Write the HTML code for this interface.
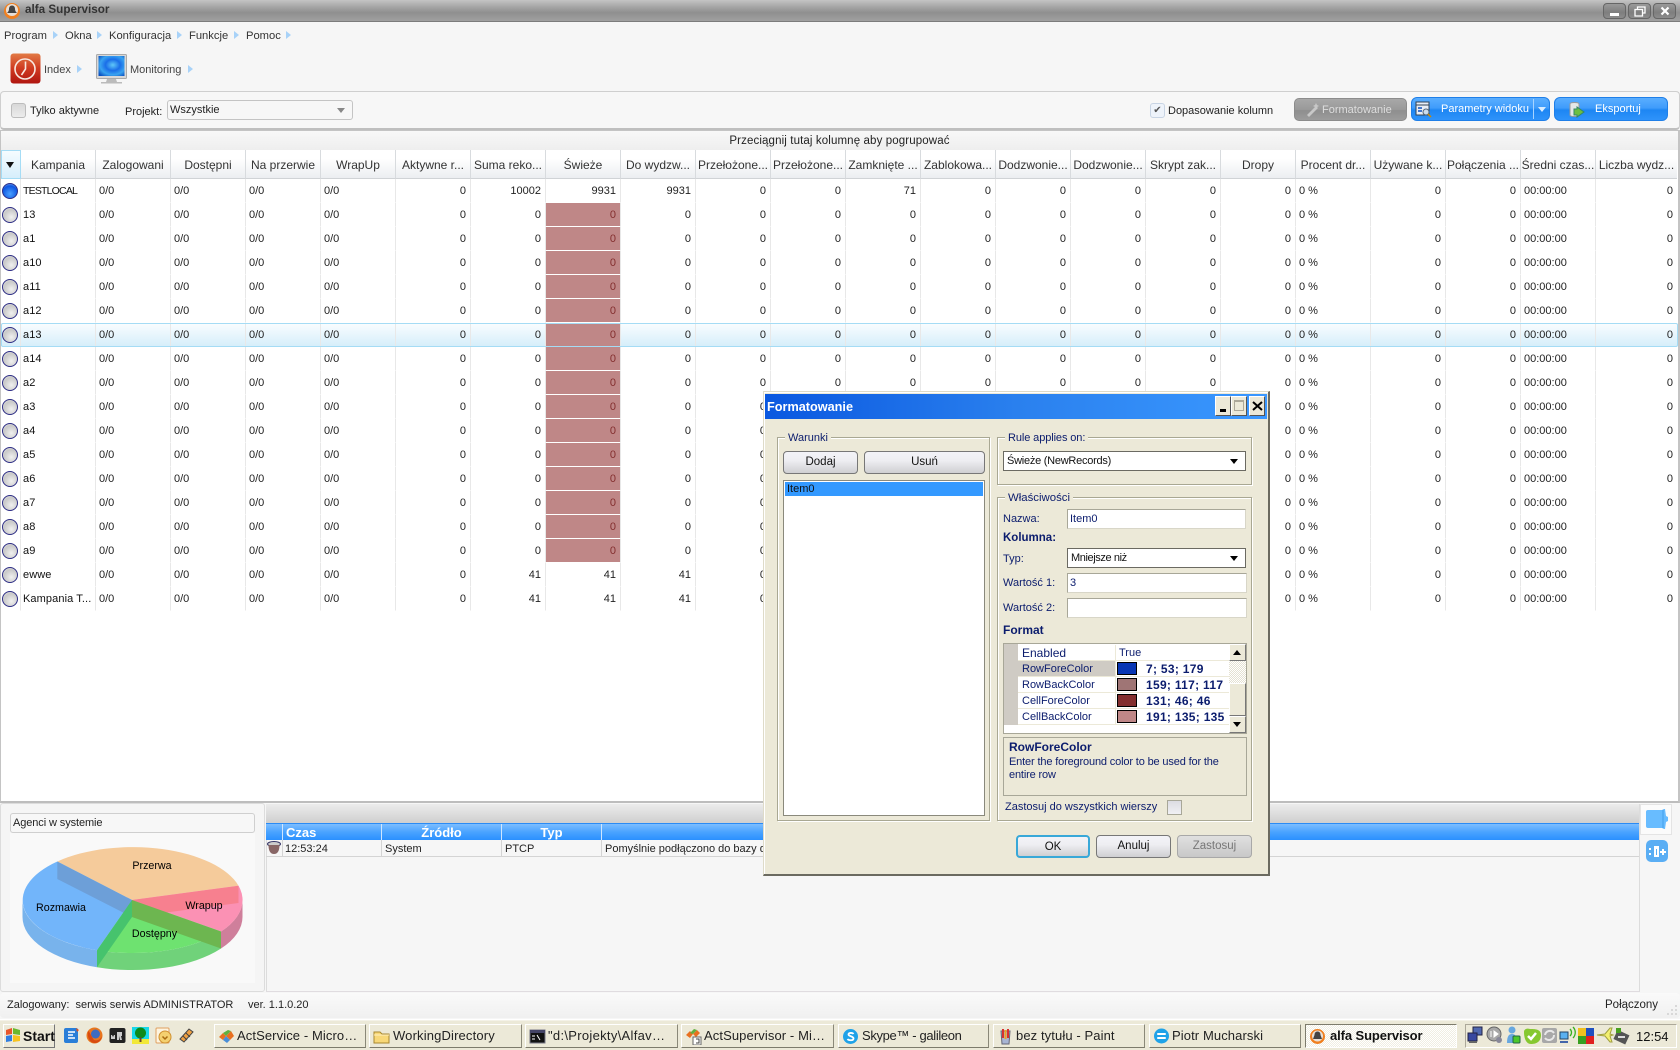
<!DOCTYPE html>
<html lang="pl"><head><meta charset="utf-8"><title>alfa Supervisor</title>
<style>
*{box-sizing:border-box}
html,body{margin:0;padding:0;width:1680px;height:1050px;overflow:hidden;background:#f6f6f6;font:11px "Liberation Sans",sans-serif;color:#222}
.a{position:absolute}
.t{position:absolute;white-space:nowrap;line-height:14px;height:14px}
.ar{position:absolute;width:0;height:0;border-left:5px solid #a8d2f8;border-top:4px solid transparent;border-bottom:4px solid transparent}
#g{position:absolute;left:1px;top:150px;width:1676px;table-layout:fixed;border-collapse:separate;border-spacing:0;font-size:11px;color:#222}
#g td,#g th{overflow:hidden;white-space:nowrap;padding:1px 4px 0 3px;text-align:right;border-right:1px solid #e8e8e8;border-bottom:1px solid #fff;height:24px}
#g th{height:29px;font-weight:normal;font-size:12px;text-align:center;padding:1px 0 0;color:#333;background:linear-gradient(#fff,#fff 30%,#eceef1);border-right:1px solid #d8dbde;border-bottom:1px solid #d0d3d6}
#g th:first-child{background:linear-gradient(#f6fcff,#d6eefb);border:1px solid #a5dcf5}
#g th:last-child,#g td:last-child{border-right:0}
#g td:nth-child(1){padding:0;}
#g td:nth-child(2){padding-left:2px;text-align:left;letter-spacing:.1px;color:#111}
#g td:nth-child(n+3):nth-child(-n+6),#g td:nth-child(19),#g td:nth-child(22){text-align:left}
#g td.x{background:#bf8787;color:#832e2e}
#g tr.h td{background:linear-gradient(#fafdff,#d6eefa)}
#g tr.h td.x{background:#bf8787}
.r{display:block;width:16px;height:16px;margin:0 0 0 1px;border-radius:50%;border:1.5px solid #2e2e86;background:radial-gradient(circle at 60% 65%,#f0f0f0,#c9c9c9 60%,#e8e8e8)}
.r.b{background:radial-gradient(circle at 50% 70%,#4aa0ff,#0d55e0 65%,#9cc4f5)}
.ld{position:absolute;background:#ece9d8;padding:0 3px;line-height:14px;white-space:nowrap}
.gb{position:absolute;border:1px solid #a9a893;box-shadow:inset 1px 1px #fff,1px 1px #fff}
.btn{position:absolute;border:1px solid #777;border-radius:4px;background:linear-gradient(#f3f3f8,#eeeef2 40%,#cfcfd2);color:#111;text-align:center;font-size:11.500px;white-space:nowrap}
.inp{position:absolute;background:#fff;border:1px solid #b3b1a0;border-color:#a8a798 #d8d6c8 #d8d6c8 #a8a798;color:#0b1c6d;padding-left:2px;font-size:11px;line-height:18px;white-space:nowrap}
.cmb{position:absolute;background:#fff;border:1px solid #6b6a62;color:#111;padding-left:3px;font-size:11px;letter-spacing:-.25px;line-height:18px;white-space:nowrap}
.cmb:after{content:"";position:absolute;right:7px;top:7px;border-top:5px solid #000;border-left:4px solid transparent;border-right:4px solid transparent}
.d{color:#0b1c6d;font-size:11px}
.pr{position:absolute;font-size:11px;color:#0b1c6d;line-height:15px;white-space:nowrap;margin-top:1px}
.sw{position:absolute;left:1117px;width:20px;height:13px;border:1px solid #000}
.val{position:absolute;left:1146px;font-weight:bold;font-size:12px;color:#0b1c6d;line-height:15px;letter-spacing:.3px;margin-top:2px}
.tb{position:absolute;top:1024px;height:24px;background:#ece9d8;border:1px solid;border-color:#fff #8a8878 #7d7b6c #fff;font-size:13px;line-height:22px;white-space:nowrap;letter-spacing:.1px;color:#222}
.tb span{position:absolute;left:22px}
.tb svg{position:absolute;left:3px;top:3px}
.blu{position:absolute;border:1px solid #1f7fe8;border-radius:6px;background:linear-gradient(#5aaeff,#3f9cfb 45%,#1d86f3 55%,#2f93fa);color:#fff;font-size:11px;line-height:22px;white-space:nowrap}
.wb{position:absolute;top:3px;width:23px;height:16px;border:1px solid #666;border-radius:4px;background:linear-gradient(#9a9a9a,#7e7e7e 60%,#8c8c8c)}
.m{font-size:11.200px;color:#333;top:29px}
</style></head><body>

<!-- title bar -->
<div class="a" style="left:0;top:0;width:1680px;height:22px;background:linear-gradient(#c4c4c4,#a8a8a8 30%,#8f8f8f 60%,#a0a0a0);border-bottom:1px solid #7c7c7c"></div>
<svg class="a" style="left:3px;top:2px" width="18" height="18" viewBox="0 0 18 18"><circle cx="9" cy="9" r="8" fill="#f08020"/><circle cx="9" cy="8" r="6" fill="#e8e0d8"/><path d="M9 3.500c2 0 3 1.600 3 3.500 0 1.500 .5 2.500 2 4H4c1.500-1.500 2-2.500 2-4 0-1.900 1-3.500 3-3.500z" fill="#444"/></svg>
<div class="t" style="left:25px;top:3px;font-weight:bold;font-size:11.700px;color:#333">alfa Supervisor</div>
<div class="wb" style="left:1603px"><div class="a" style="left:6px;top:9px;width:9px;height:3px;background:#fff"></div></div>
<div class="wb" style="left:1628px"><svg class="a" style="left:5px;top:2px" width="12" height="11" viewBox="0 0 12 11"><path d="M3.500 3V1h7.500v6H8.500M1 3.500h7.500v6.500H1z" fill="none" stroke="#fff" stroke-width="1.300"/></svg></div>
<div class="wb" style="left:1653px"><svg class="a" style="left:6px;top:2px" width="10" height="10" viewBox="0 0 10 10"><path d="M1.500 1.500l7 7M8.500 1.500l-7 7" stroke="#fff" stroke-width="2.200"/></svg></div>

<!-- menu -->
<div class="t m" style="left:4px">Program</div><i class="ar" style="left:53px;top:31px"></i>
<div class="t m" style="left:65px">Okna</div><i class="ar" style="left:97px;top:31px"></i>
<div class="t m" style="left:109px">Konfiguracja</div><i class="ar" style="left:177px;top:31px"></i>
<div class="t m" style="left:189px">Funkcje</div><i class="ar" style="left:234px;top:31px"></i>
<div class="t m" style="left:246px">Pomoc</div><i class="ar" style="left:286px;top:31px"></i>

<!-- toolbar -->
<svg class="a" style="left:10px;top:53px" width="31" height="31" viewBox="0 0 31 31"><defs><linearGradient id="ix" x1="0" y1="0" x2="0" y2="1"><stop offset="0" stop-color="#e27a45"/><stop offset=".5" stop-color="#cf3a20"/><stop offset="1" stop-color="#b01510"/></linearGradient></defs><rect x=".5" y=".5" width="30" height="30" rx="3" fill="url(#ix)"/><circle cx="15" cy="16" r="10" fill="none" stroke="#f8e8e0" stroke-width="1.600"/><path d="M15.500 8.500V16L11.500 22" fill="none" stroke="#f8e8e0" stroke-width="1.600"/></svg>
<div class="t" style="left:44px;top:63px;font-size:11px;color:#444">Index</div><i class="ar" style="left:77px;top:65px"></i>
<svg class="a" style="left:96px;top:54px" width="31" height="31" viewBox="0 0 31 31"><defs><radialGradient id="mn" cx=".55" cy=".45" r=".7"><stop offset="0" stop-color="#60c8f8"/><stop offset=".4" stop-color="#1a6ee8"/><stop offset=".7" stop-color="#3aa4f0"/><stop offset="1" stop-color="#0a50c0"/></radialGradient></defs><rect x=".5" y=".5" width="30" height="24" rx="1" fill="#d8d8d8" stroke="#aaa"/><rect x="2.500" y="2" width="26" height="20" fill="url(#mn)"/><path d="M11 25h9l1 3h5v1.500H5V28h5z" fill="#bbb"/></svg>
<div class="t" style="left:130px;top:63px;font-size:11px;color:#444">Monitoring</div><i class="ar" style="left:188px;top:65px"></i>

<!-- filter panel -->
<div class="a" style="left:0;top:91px;width:1680px;height:39px;background:#f7f7f7;border:1px solid #cfcfcf;border-bottom:2px solid #bfbfbf;border-radius:4px"></div>
<div class="a" style="left:11px;top:103px;width:15px;height:15px;border:1px solid #bcbcbc;border-radius:3px;background:linear-gradient(#d8d8d8,#ececec)"></div>
<div class="t" style="left:30px;top:104px;font-size:11px;color:#222">Tylko aktywne</div>
<div class="t" style="left:125px;top:105px;font-size:11px;color:#222">Projekt:</div>
<div class="a" style="left:167px;top:100px;width:186px;height:20px;border:1px solid #c4c4c4;border-radius:3px;background:#f7f7f7;padding-left:2px;line-height:19px;font-size:11px;color:#222">Wszystkie<i class="a" style="right:7px;top:7px;border-top:5px solid #888;border-left:4px solid transparent;border-right:4px solid transparent"></i></div>
<div class="a" style="left:1150px;top:103px;width:15px;height:15px;border:1px solid #c8d4e4;border-radius:3px;background:#eef3fa;color:#555;font-size:10px;line-height:13px;text-align:center">✔</div>
<div class="t" style="left:1168px;top:104px;font-size:11px;color:#222">Dopasowanie kolumn</div>
<div class="a" style="left:1294px;top:98px;width:113px;height:23px;border:1px solid #8c8c8c;border-radius:5px;background:linear-gradient(#a8a8a8,#9a9a9a 50%,#8e8e8e 55%,#9c9c9c);color:#dedede;font-size:11px;line-height:22px;padding-left:27px">Formatowanie<svg class="a" style="left:11px;top:3px" width="15" height="15" viewBox="0 0 15 15"><path d="M1 13L10 4l2 2-9 9zM10 1l1 2 2 1-2 1-1 2-1-2-2-1 2-1z" fill="#c8c8c8"/></svg></div>
<div class="blu" style="left:1411px;top:97px;width:139px;height:24px;padding-left:29px">Parametry widoku<div class="a" style="left:121px;top:1px;width:1px;height:20px;background:#a8d4ff"></div><i class="a" style="left:126px;top:9px;border-top:5px solid #d8ecff;border-left:4px solid transparent;border-right:4px solid transparent"></i><svg class="a" style="left:3px;top:3px" width="17" height="17" viewBox="0 0 17 17"><rect x="1" y="1" width="13" height="13" fill="#e8eef6" stroke="#345"/><path d="M1 4h13" stroke="#345"/><path d="M3 7h4M3 10h4" stroke="#47c" stroke-width="2"/><circle cx="11" cy="11" r="3" fill="#cde" stroke="#567"/><path d="M13 13l3 3" stroke="#c80" stroke-width="1.500"/></svg></div>
<div class="blu" style="left:1554px;top:97px;width:114px;height:24px;padding-left:40px">Eksportuj<svg class="a" style="left:13px;top:3px" width="18" height="18" viewBox="0 0 18 18"><path d="M2 3c0-2 9-2 9 0v11c0 2-9 2-9 0z" fill="#e4e8e8" stroke="#999"/><path d="M9 8v-2l7 5-7 5v-2H6V8z" fill="#6cc040" stroke="#386"/></svg></div>

<!-- grid -->
<div class="a" style="left:0;top:130px;width:1680px;height:673px;background:#fff;border:1px solid #c4c4c4;border-right:2px solid #c4c4c4;border-bottom:2px solid #bdbdbd"></div>
<div class="a" style="left:1px;top:131px;width:1677px;height:19px;background:linear-gradient(#f8f8f8,#eeeeee);text-align:center;font-size:11.500px;line-height:20px;letter-spacing:.12px;color:#222">Przeciągnij tutaj kolumnę aby pogrupować</div>
<table id="g"><colgroup><col style="width:20px"><col style="width:75px"><col span="20" style="width:75px"><col style="width:81px"></colgroup>
<tr><th><i class="a" style="left:5px;top:12px;border-top:6px solid #111;border-left:4px solid transparent;border-right:4px solid transparent"></i></th><th>Kampania</th><th>Zalogowani</th><th>Dostępni</th><th>Na przerwie</th><th>WrapUp</th><th>Aktywne r...</th><th>Suma reko...</th><th>Świeże</th><th>Do wydzw...</th><th>Przełożone...</th><th>Przełożone...</th><th>Zamknięte ...</th><th>Zablokowa...</th><th>Dodzwonie...</th><th>Dodzwonie...</th><th>Skrypt zak...</th><th>Dropy</th><th>Procent dr...</th><th>Używane k...</th><th>Połączenia ...</th><th>Średni czas...</th><th>Liczba wydz...</th></tr>
<tr><td><i class="r b"></i></td><td style="font-size:10.500px;letter-spacing:-.8px">TESTLOCAL</td><td>0/0</td><td>0/0</td><td>0/0</td><td>0/0</td><td>0</td><td>10002</td><td>9931</td><td>9931</td><td>0</td><td>0</td><td>71</td><td>0</td><td>0</td><td>0</td><td>0</td><td>0</td><td>0 %</td><td>0</td><td>0</td><td>00:00:00</td><td>0</td></tr>
<tr><td><i class="r"></i></td><td>13</td><td>0/0</td><td>0/0</td><td>0/0</td><td>0/0</td><td>0</td><td>0</td><td class="x">0</td><td>0</td><td>0</td><td>0</td><td>0</td><td>0</td><td>0</td><td>0</td><td>0</td><td>0</td><td>0 %</td><td>0</td><td>0</td><td>00:00:00</td><td>0</td></tr>
<tr><td><i class="r"></i></td><td>a1</td><td>0/0</td><td>0/0</td><td>0/0</td><td>0/0</td><td>0</td><td>0</td><td class="x">0</td><td>0</td><td>0</td><td>0</td><td>0</td><td>0</td><td>0</td><td>0</td><td>0</td><td>0</td><td>0 %</td><td>0</td><td>0</td><td>00:00:00</td><td>0</td></tr>
<tr><td><i class="r"></i></td><td>a10</td><td>0/0</td><td>0/0</td><td>0/0</td><td>0/0</td><td>0</td><td>0</td><td class="x">0</td><td>0</td><td>0</td><td>0</td><td>0</td><td>0</td><td>0</td><td>0</td><td>0</td><td>0</td><td>0 %</td><td>0</td><td>0</td><td>00:00:00</td><td>0</td></tr>
<tr><td><i class="r"></i></td><td>a11</td><td>0/0</td><td>0/0</td><td>0/0</td><td>0/0</td><td>0</td><td>0</td><td class="x">0</td><td>0</td><td>0</td><td>0</td><td>0</td><td>0</td><td>0</td><td>0</td><td>0</td><td>0</td><td>0 %</td><td>0</td><td>0</td><td>00:00:00</td><td>0</td></tr>
<tr><td><i class="r"></i></td><td>a12</td><td>0/0</td><td>0/0</td><td>0/0</td><td>0/0</td><td>0</td><td>0</td><td class="x">0</td><td>0</td><td>0</td><td>0</td><td>0</td><td>0</td><td>0</td><td>0</td><td>0</td><td>0</td><td>0 %</td><td>0</td><td>0</td><td>00:00:00</td><td>0</td></tr>
<tr class="h"><td><i class="r"></i></td><td>a13</td><td>0/0</td><td>0/0</td><td>0/0</td><td>0/0</td><td>0</td><td>0</td><td class="x">0</td><td>0</td><td>0</td><td>0</td><td>0</td><td>0</td><td>0</td><td>0</td><td>0</td><td>0</td><td>0 %</td><td>0</td><td>0</td><td>00:00:00</td><td>0</td></tr>
<tr><td><i class="r"></i></td><td>a14</td><td>0/0</td><td>0/0</td><td>0/0</td><td>0/0</td><td>0</td><td>0</td><td class="x">0</td><td>0</td><td>0</td><td>0</td><td>0</td><td>0</td><td>0</td><td>0</td><td>0</td><td>0</td><td>0 %</td><td>0</td><td>0</td><td>00:00:00</td><td>0</td></tr>
<tr><td><i class="r"></i></td><td>a2</td><td>0/0</td><td>0/0</td><td>0/0</td><td>0/0</td><td>0</td><td>0</td><td class="x">0</td><td>0</td><td>0</td><td>0</td><td>0</td><td>0</td><td>0</td><td>0</td><td>0</td><td>0</td><td>0 %</td><td>0</td><td>0</td><td>00:00:00</td><td>0</td></tr>
<tr><td><i class="r"></i></td><td>a3</td><td>0/0</td><td>0/0</td><td>0/0</td><td>0/0</td><td>0</td><td>0</td><td class="x">0</td><td>0</td><td>0</td><td>0</td><td>0</td><td>0</td><td>0</td><td>0</td><td>0</td><td>0</td><td>0 %</td><td>0</td><td>0</td><td>00:00:00</td><td>0</td></tr>
<tr><td><i class="r"></i></td><td>a4</td><td>0/0</td><td>0/0</td><td>0/0</td><td>0/0</td><td>0</td><td>0</td><td class="x">0</td><td>0</td><td>0</td><td>0</td><td>0</td><td>0</td><td>0</td><td>0</td><td>0</td><td>0</td><td>0 %</td><td>0</td><td>0</td><td>00:00:00</td><td>0</td></tr>
<tr><td><i class="r"></i></td><td>a5</td><td>0/0</td><td>0/0</td><td>0/0</td><td>0/0</td><td>0</td><td>0</td><td class="x">0</td><td>0</td><td>0</td><td>0</td><td>0</td><td>0</td><td>0</td><td>0</td><td>0</td><td>0</td><td>0 %</td><td>0</td><td>0</td><td>00:00:00</td><td>0</td></tr>
<tr><td><i class="r"></i></td><td>a6</td><td>0/0</td><td>0/0</td><td>0/0</td><td>0/0</td><td>0</td><td>0</td><td class="x">0</td><td>0</td><td>0</td><td>0</td><td>0</td><td>0</td><td>0</td><td>0</td><td>0</td><td>0</td><td>0 %</td><td>0</td><td>0</td><td>00:00:00</td><td>0</td></tr>
<tr><td><i class="r"></i></td><td>a7</td><td>0/0</td><td>0/0</td><td>0/0</td><td>0/0</td><td>0</td><td>0</td><td class="x">0</td><td>0</td><td>0</td><td>0</td><td>0</td><td>0</td><td>0</td><td>0</td><td>0</td><td>0</td><td>0 %</td><td>0</td><td>0</td><td>00:00:00</td><td>0</td></tr>
<tr><td><i class="r"></i></td><td>a8</td><td>0/0</td><td>0/0</td><td>0/0</td><td>0/0</td><td>0</td><td>0</td><td class="x">0</td><td>0</td><td>0</td><td>0</td><td>0</td><td>0</td><td>0</td><td>0</td><td>0</td><td>0</td><td>0 %</td><td>0</td><td>0</td><td>00:00:00</td><td>0</td></tr>
<tr><td><i class="r"></i></td><td>a9</td><td>0/0</td><td>0/0</td><td>0/0</td><td>0/0</td><td>0</td><td>0</td><td class="x">0</td><td>0</td><td>0</td><td>0</td><td>0</td><td>0</td><td>0</td><td>0</td><td>0</td><td>0</td><td>0 %</td><td>0</td><td>0</td><td>00:00:00</td><td>0</td></tr>
<tr><td><i class="r"></i></td><td>ewwe</td><td>0/0</td><td>0/0</td><td>0/0</td><td>0/0</td><td>0</td><td>41</td><td>41</td><td>41</td><td>0</td><td>0</td><td>0</td><td>0</td><td>0</td><td>0</td><td>0</td><td>0</td><td>0 %</td><td>0</td><td>0</td><td>00:00:00</td><td>0</td></tr>
<tr><td><i class="r"></i></td><td>Kampania T...</td><td>0/0</td><td>0/0</td><td>0/0</td><td>0/0</td><td>0</td><td>41</td><td>41</td><td>41</td><td>0</td><td>0</td><td>0</td><td>0</td><td>0</td><td>0</td><td>0</td><td>0</td><td>0 %</td><td>0</td><td>0</td><td>00:00:00</td><td>0</td></tr>
</table>
<div class="a" style="left:1px;top:323px;width:1677px;height:24px;border:1.500px solid #a5dcf5;border-radius:2px"></div>

<!-- lower left chart -->
<div class="a" style="left:0;top:803px;width:265px;height:189px;background:#f5f5f5;border:1px solid #dcdcdc;border-radius:3px"></div>
<div class="a" style="left:10px;top:813px;width:245px;height:20px;border:1px solid #cfcfcf;border-radius:3px;background:#f7f7f7;padding-left:2px;line-height:19px;font-size:11px;letter-spacing:-.1px;color:#222">Agenci w systemie</div>
<svg class="a" style="left:0;top:0;font:10.700px 'Liberation Sans',sans-serif" width="265" height="1000" viewBox="0 0 265 1000">
<rect x="10" y="833" width="245" height="150" fill="#f9f9f9"/>
<path d="M22.500 900A110 53 0 0 0 97 950.200V967.200A110 53 0 0 1 22.500 917Z" fill="#78b3ec"/>
<path d="M97 950.200A110 53 0 0 0 221 931.500V948.500A110 53 0 0 1 97 967.200Z" fill="#70d27a"/>
<path d="M221 931.500A110 53 0 0 0 242.500 900V917A110 53 0 0 1 221 948.500Z" fill="#cf7f9b"/>
<path d="M132 900L57.300 861.500A110 53 0 0 1 238.500 885.700Z" fill="#f5cb9b"/>
<path d="M132 900L238.500 885.700A110 53 0 0 1 221 931.500Z" fill="#fb91b4"/>
<path d="M132 900L221 931.500A110 53 0 0 1 97 950.200Z" fill="#6ee270"/>
<path d="M132 900L97 950.200A110 53 0 0 1 57.300 861.500Z" fill="#72b5fa"/>
<path d="M57.300 861.500L132 900V917L57.300 879Z" fill="#6d9fd8"/>
<path d="M132 900L238.500 885.700V903L132 917Z" fill="#f7808f"/>
<path d="M97 950.200L132 900V917L97 967.200Z" fill="#46c36d"/>
<path d="M132 900L221 931.500V948.500L132 917Z" fill="#6db650"/>
<text x="152" y="869" text-anchor="middle">Przerwa</text>
<text x="204" y="909" text-anchor="middle">Wrapup</text>
<text x="61" y="911" text-anchor="middle">Rozmawia</text>
<text x="154.500" y="937" text-anchor="middle">Dostępny</text>
</svg>

<!-- log -->
<div class="a" style="left:266px;top:804px;width:1374px;height:188px;background:#f6f6f6;border-right:1px solid #dcdcdc;border-left:1px solid #dcdcdc;border-bottom:1px solid #e0dce0"></div>
<div class="a" style="left:266px;top:804px;width:1373px;height:19px;background:linear-gradient(#ececec,#cfcfcf)"></div>
<div class="a" style="left:266px;top:823px;width:1373px;height:17px;background:linear-gradient(#7cbdff,#4aa3ff 50%,#2a90ff);border-top:1px solid #2a8bf5;color:#fff;font-weight:bold;font-size:13px;line-height:17px">
<span class="a" style="left:20px">Czas</span><span class="a" style="left:116px;width:119px;text-align:center">Źródło</span><span class="a" style="left:236px;width:99px;text-align:center">Typ</span>
<i class="a" style="left:16px;top:0;width:1px;height:16px;background:#cfe6ff"></i><i class="a" style="left:115px;top:0;width:1px;height:16px;background:#cfe6ff"></i><i class="a" style="left:235px;top:0;width:1px;height:16px;background:#cfe6ff"></i><i class="a" style="left:335px;top:0;width:1px;height:16px;background:#cfe6ff"></i></div>
<div class="a" style="left:266px;top:840px;width:1373px;height:17px;border-bottom:1px solid #d4d4d4;font-size:11px;line-height:18px;color:#222">
<svg class="a" style="left:1px;top:1px" width="14" height="14" viewBox="0 0 14 14"><ellipse cx="7" cy="3" rx="6.500" ry="2.500" fill="#ccc" stroke="#336"/><path d="M1.500 4c0 6 2 9 5.500 9s5.500-3 5.500-9z" fill="#866"/></svg>
<span class="a" style="left:19px">12:53:24</span><span class="a" style="left:119px">System</span><span class="a" style="left:239px">PTCP</span><span class="a" style="left:339px">Pomyślnie podłączono do bazy danych</span>
<i class="a" style="left:16px;top:0;width:1px;height:16px;background:#d4d4d4"></i><i class="a" style="left:115px;top:0;width:1px;height:16px;background:#d4d4d4"></i><i class="a" style="left:235px;top:0;width:1px;height:16px;background:#d4d4d4"></i><i class="a" style="left:335px;top:0;width:1px;height:16px;background:#d4d4d4"></i></div>

<!-- right strip -->
<div class="a" style="left:1640px;top:804px;width:32px;height:31px;background:#fbfbfb;border:1px solid #e4e4e4"></div>
<svg class="a" style="left:1645px;top:808px" width="24" height="22" viewBox="0 0 24 22"><path d="M3 2h14l2-1h1l1 7 2 1v4l-2 1-1 7h-1l-2-1H3a2 2 0 0 1-2-2V4a2 2 0 0 1 2-2z" fill="#68bcff"/><path d="M17 2h2v18h-2z" fill="#55aef5"/></svg>
<div class="a" style="left:1646px;top:840px;width:22px;height:22px;border-radius:5px;background:#5aaef4"></div>
<svg class="a" style="left:1646px;top:840px" width="22" height="22" viewBox="0 0 22 22"><path d="M3 8h2v2H3zM3 13h2v2H3zM8 6h5v11H8V9zM10 9v6h1V9z" fill="#fff"/><path d="M14 11h2V9h2v2h2v2h-2v2h-2v-2h-2z" fill="#fff"/></svg>

<!-- status -->
<div class="a" style="left:0;top:993px;width:1680px;height:25px;background:linear-gradient(#fafafa,#f0f0f0);border-radius:4px"></div>
<div class="t" style="left:7px;top:998px;font-size:11px;color:#222">Zalogowany: &nbsp;serwis serwis ADMINISTRATOR</div>
<div class="t" style="left:248px;top:998px;font-size:11px;color:#222">ver. 1.1.0.20</div>
<div class="t" style="left:1605px;top:998px;font-size:11.500px;color:#222">Połączony</div>
<svg class="a" style="left:1666px;top:1004px" width="12" height="12" viewBox="0 0 12 12"><path d="M9 1h2v2H9zM5 5h2v2H5zM9 5h2v2H9zM1 9h2v2H1zM5 9h2v2H5zM9 9h2v2H9z" fill="#d8d8d8"/></svg>

<!-- taskbar -->
<div class="a" style="left:0;top:1019px;width:1680px;height:31px;background:#ece9d8;border-top:1px solid #fff;box-shadow:inset 0 1px #f4f2e8"></div>
<div class="a" style="left:3px;top:1024px;width:52px;height:24px;background:#ece9d8;border:1px solid;border-color:#fff #777 #777 #fff;font-weight:bold;font-size:14px;line-height:22px;color:#111;padding-left:19px">Start</div>
<svg class="a" style="left:5px;top:1027px" width="16" height="17" viewBox="0 0 16 17"><path d="M1 3l6-2v6l-6 1z" fill="#e8572a"/><path d="M8 1l7 2v5l-7-1z" fill="#6ab82e"/><path d="M1 9l6-1v6l-6 1z" fill="#2f7ee0"/><path d="M8 8l7 1v5l-7 1z" fill="#f6c21e"/></svg>
<svg class="a" style="left:63px;top:1027px" width="17" height="17" viewBox="0 0 17 17"><rect x="1" y="1" width="14" height="15" rx="2" fill="#2a7ed8"/><path d="M5 5h7M5 8h5M5 11h7" stroke="#fff" stroke-width="1.500"/><path d="M13 1l3 2-2 2z" fill="#e05020"/></svg>
<svg class="a" style="left:86px;top:1027px" width="17" height="17" viewBox="0 0 17 17"><circle cx="8.500" cy="8.500" r="8" fill="#e8761e"/><circle cx="9.500" cy="7" r="4.500" fill="#3c6cc0"/><path d="M2 4c2 1 3 5 6 9 3 1 6 0 8-4-1 5-4 7-7 7-5 0-8-5-7-12z" fill="#d84a10"/></svg>
<svg class="a" style="left:109px;top:1027px" width="17" height="17" viewBox="0 0 17 17"><rect x=".5" y="1" width="16" height="15" rx="2" fill="#222"/><path d="M2 12v-4h1l1 2 1-2h1v4zM8 13V5h5v4h-1l1 4h-2l-1-4v4z" fill="#ccc"/></svg>
<svg class="a" style="left:132px;top:1027px" width="17" height="17" viewBox="0 0 17 17"><rect width="17" height="17" fill="#19d8e8"/><rect y="12" width="17" height="5" fill="#f2e838"/><circle cx="8.500" cy="6" r="5.500" fill="#0e8a1a"/><rect x="7.500" y="10" width="2" height="5" fill="#643"/></svg>
<svg class="a" style="left:155px;top:1027px" width="17" height="17" viewBox="0 0 17 17"><rect x="1" y="1" width="13" height="15" rx="1" fill="#fdf4e0" stroke="#e0a060"/><circle cx="10" cy="10" r="6" fill="#f4d070" stroke="#d09030"/><path d="M7.500 9.500l2.500 2.500 2.500-2.500" fill="none" stroke="#a86a10" stroke-width="1.500"/></svg>
<svg class="a" style="left:178px;top:1027px" width="17" height="17" viewBox="0 0 17 17"><path d="M2 12L11 2l4 3-9 10z" fill="#f0a040" stroke="#444"/><path d="M5 9l4 4M8 6l4 4" stroke="#444"/></svg>

<div class="tb" style="left:214px;width:152px"><svg width="17" height="17" viewBox="0 0 17 17"><path d="M1 9l4-4 3 3-3 4zM8 8l5-5 3 5-4 4z" fill="#e87020"/><path d="M5 12l3-4 4 4-3 3z" fill="#4a8ed8"/><path d="M5 5l3 3 5-5-3-1z" fill="#60b040"/></svg><span>ActService - Micro…</span></div>
<div class="tb" style="left:369px;width:153px"><svg width="17" height="17" viewBox="0 0 17 17"><path d="M1 4h6l2 2h7v9H1z" fill="#f8d878" stroke="#a88830"/><path d="M1 7h15" stroke="#fff0c0"/></svg><span style="left:23px;letter-spacing:.15px">WorkingDirectory</span></div>
<div class="tb" style="left:525px;width:153px"><svg width="17" height="17" viewBox="0 0 17 17"><rect x="1" y="2" width="15" height="13" fill="#111" stroke="#778"/><rect x="1" y="2" width="15" height="3" fill="#446"/><path d="M3 8h3M3 11h3M8 7l3 5" stroke="#fff"/></svg><span style="letter-spacing:.3px">"d:\Projekty\Alfav…</span></div>
<div class="tb" style="left:681px;width:153px"><svg width="17" height="17" viewBox="0 0 17 17"><path d="M1 7l4-4 3 3-3 4zM8 6l4-4 3 3-4 4z" fill="#e87020"/><path d="M5 5l3 1 4-4-3-1z" fill="#60b040"/><rect x="8" y="9" width="8" height="8" fill="#fff" stroke="#666"/><path d="M11 11h3v4h-3" fill="none" stroke="#444"/></svg><span>ActSupervisor - Mi…</span></div>
<div class="tb" style="left:838px;width:151px"><svg width="17" height="17" viewBox="0 0 17 17"><circle cx="8.500" cy="8.500" r="7.500" fill="#1fa2e8"/><path d="M11.500 6c-1-1.500-5-1.500-5 .5s5 1.500 5 4-5 2-6 .5" fill="none" stroke="#fff" stroke-width="1.800"/></svg><span style="left:23px;letter-spacing:-.35px">Skype™ - galileon</span></div>
<div class="tb" style="left:993px;width:152px"><svg width="17" height="17" viewBox="0 0 17 17"><path d="M4 3h9l-1 13H5z" fill="#a8b4d4" stroke="#667"/><path d="M6 1v9M8.500 2v9M11 1v9" stroke-width="2" stroke="#d83030"/><path d="M8.500 2v9" stroke="#f0a020" stroke-width="2"/></svg><span>bez tytułu - Paint</span></div>
<div class="tb" style="left:1149px;width:152px"><svg width="17" height="17" viewBox="0 0 17 17"><circle cx="8.500" cy="8" r="7.500" fill="#1fa2e8"/><rect x="4" y="5" width="9" height="2" rx="1" fill="#fff"/><rect x="4" y="9" width="9" height="2" rx="1" fill="#fff"/></svg><span>Piotr Mucharski</span></div>
<div class="tb" style="left:1305px;width:152px;border-color:#7d7b6c #fff #fff #7d7b6c;background:repeating-conic-gradient(#fff 0 25%,#f0eee2 0 50%) 0 0/2px 2px;font-weight:bold;letter-spacing:-.1px;color:#111"><svg width="17" height="17" viewBox="0 0 17 17"><circle cx="8.500" cy="8.500" r="7.500" fill="#f08020"/><circle cx="8.500" cy="8" r="5.500" fill="#e8e0d8"/><path d="M8.500 3.500c2 0 3 1.500 3 3.500l1.500 4H4l1.500-4c0-2 1-3.500 3-3.500z" fill="#444"/></svg><span style="left:24px">alfa Supervisor</span></div>

<div class="a" style="left:1465px;top:1024px;width:212px;height:24px;border:1px solid;border-color:#aca899 #fff #fff #aca899;background:#ece9d8"></div>
<svg class="a" style="left:1466px;top:1026px" width="168" height="20" viewBox="0 0 168 20">
<rect x="7" y="1" width="9" height="8" fill="#5068b0" stroke="#224"/><rect x="2" y="7" width="9" height="8" fill="#3848a0" stroke="#224"/><path d="M3 16h8" stroke="#666" stroke-width="2"/>
<circle cx="28" cy="8" r="7" fill="#a8a8a8" stroke="#666"/><path d="M25 5v6M28 5l4 3-4 3z" fill="#fff" stroke="#fff"/><circle cx="33" cy="14" r="3" fill="#889"/>
<circle cx="46" cy="4" r="3.500" fill="#68a8e0"/><path d="M41 17c0-7 2-9 5-9s5 2 5 9z" fill="#68a8e0"/><rect x="47" y="10" width="7" height="7" rx="1" fill="#4cc82c" stroke="#264"/>
<path d="M58 6c0-3 3-4 6-3 5 0 11 0 11 6 0 7-5 9-10 9s-7-6-7-12z" fill="#86c830"/><path d="M62 10l3 3 5-6" fill="none" stroke="#fff" stroke-width="2.500"/>
<rect x="76" y="2" width="15" height="15" rx="2" fill="#a8a8a8"/><path d="M79 9a5 5 0 0 1 9-2M88 9a5 5 0 0 1-9 3" fill="none" stroke="#e8e8e8" stroke-width="2"/>
<rect x="94" y="6" width="8" height="7" fill="#5ab0f0" stroke="#246"/><path d="M94 16h8" stroke="#46a" stroke-width="2"/><path d="M104 3c2 2 2 5 0 7M107 1c3 3 3 8 0 11" fill="none" stroke="#38b020" stroke-width="1.300"/>
<rect x="112" y="2" width="8" height="8" fill="#f0c020"/><rect x="120" y="2" width="8" height="8" fill="#2050c0"/><rect x="112" y="10" width="8" height="8" fill="#38a020"/><rect x="120" y="10" width="8" height="8" fill="#e02020"/>
<path d="M131 9l8-1 5-6h2l-2 6 3 1-3 1 2 6h-2l-5-6-8-1z" fill="#f4f070" stroke="#a0a040"/>
<rect x="149" y="6" width="13" height="10" fill="#555" transform="rotate(25 155 11)"/><path d="M150 2h5v5h-5z" fill="#48a020"/><path d="M152 11h7" stroke="#ddd" stroke-width="2"/>
</svg>
<div class="t" style="left:1636px;top:1030px;font-size:13px;color:#111">12:54</div>

<!-- dialog -->
<div class="a" style="left:763px;top:391px;width:507px;height:485px;background:#ece9d8;border:1px solid #dedbc9;border-right:2px solid #6b6a60;border-bottom:2px solid #6b6a60;box-shadow:inset 1px 1px #fff"></div>
<div class="a" style="left:765px;top:394px;width:502px;height:25px;background:linear-gradient(90deg,#0a58e0,#2a80ee 50%,#3a98ff)"></div>
<div class="t" style="left:767px;top:400px;font-weight:bold;font-size:12.700px;color:#fff">Formatowanie</div>
<div class="a" style="left:1215px;top:396px;width:16px;height:20px;background:#ece9d8;border:1px solid;border-color:#fff #555 #555 #fff"><i class="a" style="left:4px;top:12px;width:6px;height:3px;background:#000"></i></div>
<div class="a" style="left:1231px;top:396px;width:16px;height:20px;background:#ece9d8;border:1px solid;border-color:#fff #555 #555 #fff"><i class="a" style="left:2px;top:3px;width:10px;height:11px;border:1px solid #aca899;border-top-width:2px"></i></div>
<div class="a" style="left:1249px;top:396px;width:16px;height:20px;background:#ece9d8;border:1px solid;border-color:#fff #555 #555 #fff"><svg class="a" style="left:2px;top:4px" width="11" height="10" viewBox="0 0 11 10"><path d="M1 1l9 8M10 1l-9 8" stroke="#000" stroke-width="2"/></svg></div>

<div class="gb" style="left:777px;top:437px;width:213px;height:384px"></div>
<div class="ld d" style="left:785px;top:431px">Warunki</div>
<div class="btn" style="left:783px;top:451px;width:75px;height:23px;line-height:21px">Dodaj</div>
<div class="btn" style="left:864px;top:451px;width:121px;height:23px;line-height:21px">Usuń</div>
<div class="a" style="left:783px;top:480px;width:202px;height:336px;background:#fff;border:1px solid #8a897c"></div>
<div class="a" style="left:785px;top:482px;width:198px;height:14px;background:#3399ff;color:#111;padding-left:2px;line-height:14px;font-size:11px">Item0</div>

<div class="gb" style="left:997px;top:437px;width:255px;height:48px"></div>
<div class="ld d" style="left:1005px;top:431px;letter-spacing:-.1px">Rule applies on:</div>
<div class="cmb" style="left:1003px;top:451px;width:243px;height:20px">Świeże (NewRecords)</div>

<div class="gb" style="left:997px;top:497px;width:255px;height:324px"></div>
<div class="ld d" style="left:1005px;top:491px;font-size:11.400px">Właściwości</div>
<div class="t d" style="left:1003px;top:512px">Nazwa:</div>
<div class="inp" style="left:1067px;top:509px;width:179px;height:20px">Item0</div>
<div class="t d" style="left:1003px;top:531px;font-weight:bold;font-size:11.500px">Kolumna:</div>
<div class="t d" style="left:1003px;top:552px">Typ:</div>
<div class="cmb" style="left:1067px;top:548px;width:179px;height:20px;letter-spacing:-.4px">Mniejsze niż</div>
<div class="t d" style="left:1003px;top:576px">Wartość 1:</div>
<div class="inp" style="left:1067px;top:573px;width:180px;height:20px">3</div>
<div class="t d" style="left:1003px;top:601px">Wartość 2:</div>
<div class="inp" style="left:1067px;top:598px;width:180px;height:20px"></div>
<div class="t d" style="left:1003px;top:623px;font-weight:bold;font-size:12px">Format</div>

<div class="a" style="left:1003px;top:643px;width:244px;height:91px;background:#fff;border:1px solid #a8a798"></div>
<div class="a" style="left:1004px;top:644px;width:14px;height:81px;background:#cfcbc4"></div>
<div class="a" style="left:1018px;top:660px;width:97px;height:16px;background:#cfcbc4"></div>
<div class="a" style="left:1018px;top:660px;width:211px;height:1px;background:#ece9d8"></div>
<div class="a" style="left:1018px;top:676px;width:211px;height:1px;background:#ece9d8"></div>
<div class="a" style="left:1018px;top:692px;width:211px;height:1px;background:#ece9d8"></div>
<div class="a" style="left:1018px;top:708px;width:211px;height:1px;background:#ece9d8"></div>
<div class="a" style="left:1018px;top:724px;width:211px;height:1px;background:#ece9d8"></div>
<div class="a" style="left:1115px;top:645px;width:1px;height:80px;background:#ece9d8"></div>
<div class="pr" style="left:1022px;top:645px;font-size:12px">Enabled</div><div class="pr" style="left:1119px;top:645px">True</div>
<div class="pr" style="left:1022px;top:661px">RowForeColor</div><div class="sw" style="top:662px;background:#0735b3"></div><div class="val" style="top:660px">7; 53; 179</div>
<div class="pr" style="left:1022px;top:677px">RowBackColor</div><div class="sw" style="top:678px;background:#9f7575"></div><div class="val" style="top:676px">159; 117; 117</div>
<div class="pr" style="left:1022px;top:693px">CellForeColor</div><div class="sw" style="top:694px;background:#832e2e"></div><div class="val" style="top:692px">131; 46; 46</div>
<div class="pr" style="left:1022px;top:709px">CellBackColor</div><div class="sw" style="top:710px;background:#bf8787"></div><div class="val" style="top:708px">191; 135; 135</div>
<div class="a" style="left:1229px;top:644px;width:17px;height:89px;background:repeating-conic-gradient(#fff 0 25%,#e4e1d2 0 50%) 0 0/2px 2px"></div>
<div class="a" style="left:1229px;top:644px;width:17px;height:17px;background:#ece9d8;border:1px solid;border-color:#fff #777 #777 #fff"><i class="a" style="left:3px;top:5px;border-bottom:5px solid #000;border-left:4px solid transparent;border-right:4px solid transparent"></i></div>
<div class="a" style="left:1229px;top:683px;width:17px;height:33px;background:#ece9d8;border:1px solid;border-color:#fff #777 #777 #fff"></div>
<div class="a" style="left:1229px;top:716px;width:17px;height:17px;background:#ece9d8;border:1px solid;border-color:#fff #777 #777 #fff"><i class="a" style="left:3px;top:5px;border-top:5px solid #000;border-left:4px solid transparent;border-right:4px solid transparent"></i></div>

<div class="a" style="left:1003px;top:737px;width:244px;height:59px;border:1px solid #a8a798"></div>
<div class="t d" style="left:1009px;top:740px;font-weight:bold;font-size:12px">RowForeColor</div>
<div class="t d" style="left:1009px;top:755px;letter-spacing:-.15px">Enter the foreground color to be used for the</div>
<div class="t d" style="left:1009px;top:768px;letter-spacing:-.15px">entire row</div>
<div class="t d" style="left:1005px;top:800px">Zastosuj do wszystkich wierszy</div>
<div class="a" style="left:1167px;top:800px;width:15px;height:15px;border:1px solid #a8a798;background:linear-gradient(#dcdce2,#f0f0f4)"></div>

<div class="btn" style="left:1016px;top:835px;width:74px;height:23px;line-height:20px;border:2px solid #38a8d8">OK</div>
<div class="btn" style="left:1096px;top:835px;width:75px;height:23px;line-height:21px">Anuluj</div>
<div class="btn" style="left:1177px;top:835px;width:75px;height:23px;line-height:21px;border-color:#a8a8a8;background:linear-gradient(#e0e0e0,#c8c8c8);color:#777">Zastosuj</div>
</body></html>
